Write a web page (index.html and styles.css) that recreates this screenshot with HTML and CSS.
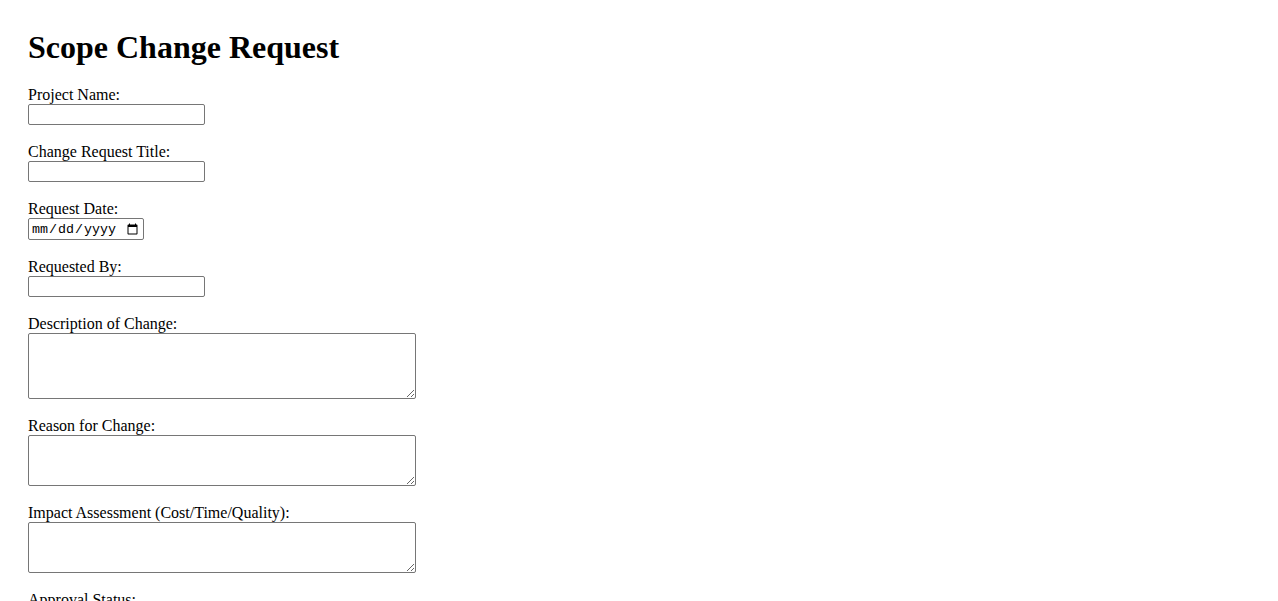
FILE: index.html
```html
<!DOCTYPE html>
<html lang="en">
<head>
<meta charset="utf-8">
<title>Scope Change Request</title>
<link rel="stylesheet" href="styles.css">
</head>
<body>
<div class="page">
  <h1 class="title">Scope Change Request</h1>
  <form class="form">
    <div class="field">
      <label class="label" for="project">Project Name:</label>
      <input class="text-input" type="text" id="project">
    </div>
    <div class="field">
      <label class="label" for="crtitle">Change Request Title:</label>
      <input class="text-input" type="text" id="crtitle">
    </div>
    <div class="field">
      <label class="label" for="rdate">Request Date:</label>
      <input class="date-input" type="date" id="rdate">
    </div>
    <div class="field">
      <label class="label" for="rby">Requested By:</label>
      <input class="text-input" type="text" id="rby">
    </div>
    <div class="field">
      <label class="label" for="desc">Description of Change:</label>
      <textarea class="area area-tall" id="desc"></textarea>
    </div>
    <div class="field">
      <label class="label" for="reason">Reason for Change:</label>
      <textarea class="area area-short" id="reason"></textarea>
    </div>
    <div class="field">
      <label class="label" for="impact">Impact Assessment (Cost/Time/Quality):</label>
      <textarea class="area area-short" id="impact"></textarea>
    </div>
    <div class="field">
      <label class="label" for="status">Approval Status:</label>
      <select class="select" id="status">
        <option>Pending</option>
        <option>Approved</option>
        <option>Rejected</option>
      </select>
    </div>
  </form>
</div>
</body>
</html>
```

FILE: styles.css
```css
html, body {
  margin: 0;
  padding: 0;
  background: #ffffff;
}

body {
  font-family: "Liberation Serif", "Times New Roman", serif;
  font-size: 16px;
  color: #000000;
}

.page {
  padding: 29px 28px 28px 28px;
}

.title {
  font-size: 32px;
  font-weight: bold;
  margin: 0 0 20px 0;
  line-height: 37px;
}

.form {
  display: flex;
  flex-direction: column;
}

.field {
  display: flex;
  flex-direction: column;
  align-items: flex-start;
  margin-bottom: 18px;
}

.label {
  display: block;
  line-height: 18px;
}

.text-input {
  box-sizing: border-box;
  width: 177px;
  height: 21px;
  margin: 0;
  border: 1px solid #767676;
  border-radius: 2px;
  padding: 1px 2px;
  background: #ffffff;
}

.date-input {
  box-sizing: border-box;
  width: 116px;
  height: 22px;
  margin: 0;
  border: 1px solid #767676;
  border-radius: 2px;
  padding: 2px 2px 0 2px;
  font-family: "Liberation Mono", "DejaVu Sans Mono", monospace;
  font-size: 13.33px;
  background: #ffffff;
}

.area {
  box-sizing: border-box;
  width: 388px;
  margin: 0;
  border: 1px solid #767676;
  border-radius: 2px;
  padding: 2px;
  background: #ffffff;
}

.area-tall {
  height: 66px;
}

.area-short {
  height: 51px;
}

.select {
  margin: 0;
}
```
